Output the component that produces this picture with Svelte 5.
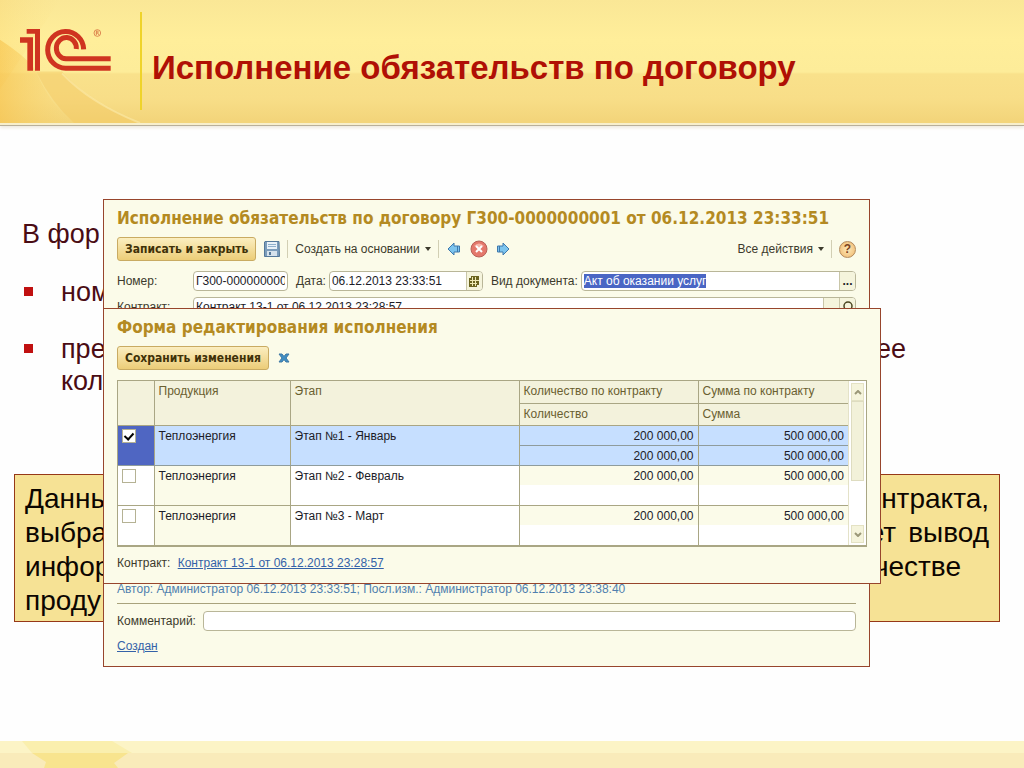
<script lang="ts">
  import { onMount } from "svelte";

  const rows = [
    { product: "Теплоэнергия", stage: "Этап №1 - Январь", qty: "200 000,00", sum: "500 000,00", checked: true, doneQty: "200 000,00", doneSum: "500 000,00" },
    { product: "Теплоэнергия", stage: "Этап №2 - Февраль", qty: "200 000,00", sum: "500 000,00", checked: false, doneQty: "", doneSum: "" },
    { product: "Теплоэнергия", stage: "Этап №3 - Март", qty: "200 000,00", sum: "500 000,00", checked: false, doneQty: "", doneSum: "" },
  ];

  let kind: HTMLInputElement;

  onMount(() => {
    kind.focus();
    kind.select();
  });
</script>

<div class="slide">
  <header>
    <svg class="glow" viewBox="0 0 240 124" preserveAspectRatio="none" aria-hidden="true">
      <defs>
        <linearGradient id="ray" x1="0" y1="0" x2="1" y2="0">
          <stop offset="0" stop-color="#f7c24a" stop-opacity="0.6" />
          <stop offset="1" stop-color="#f7d068" stop-opacity="0" />
        </linearGradient>
      </defs>
      <path d="M0 40Q30 60 36 72Q50 106 74 124H0Z" fill="url(#ray)" />
      <path d="M36 72Q52 104 74 124H140Q90 104 62 72Z" fill="#f3c65c" opacity="0.4" />
      <path d="M62 74Q90 104 140 124" fill="none" stroke="#fdf0b4" stroke-width="2" opacity="0.5" />
      <path d="M0 0H60L0 90Z" fill="url(#ray)" opacity="0.3" />
    </svg>
    <svg class="logo" viewBox="60 84 276 132" role="img" aria-label="1С">
      <g fill="#cf3420">
        <path d="M80 87H120V212H105V101H80Z" />
        <path d="M60 112H99V212H82V128H60Z" />
      </g>
      <g fill="none" stroke="#cf3420" stroke-width="15">
        <path d="M251 148A54 55 0 1 0 198 204.500H332" />
        <path d="M229 147A30 32 0 1 0 198 176.500H332" />
      </g>
      <circle cx="292" cy="99" r="10" fill="none" stroke="#cf5a30" stroke-width="2" />
      <path d="M289 105V93H293Q297 96 293 99H289M293 99L297 105" fill="none" stroke="#cf5a30" stroke-width="2" />
    </svg>
    <h1>Исполнение обязательств по договору</h1>
  </header>

  <main>
    <p class="lead">В фор</p>
    <ul>
      <li>ном</li>
      <li><span class="split"><span>пре</span><span>ее</span></span>кол</li>
    </ul>
    <div class="note">
      <div class="split"><span>Данны</span><span>нтракта,</span></div>
      <div class="split"><span>выбра</span><span class="pair"><span>ет</span><span>вывод</span></span></div>
      <div class="split short"><span>инфор</span><span>честве</span></div>
      <div>проду</div>
    </div>

    <section class="window doc">
      <h2>Исполнение обязательств по договору Г300-0000000001 от 06.12.2013 23:33:51</h2>
      <div class="toolbar">
        <button class="gold">Записать и закрыть</button>
        <button class="icon" aria-label="Записать">
          <svg width="16" height="16" viewBox="0 0 16 16">
            <path d="M1 .5H15L15.500 15.500H.5V1Z" fill="#7c9dbb" stroke="#54789a" />
            <path d="M3 1H13V8H3Z" fill="#e8f1f8" />
            <path d="M4 3.500H12M4 5.500H12" stroke="#8fb0cc" />
            <path d="M3 10H13V15H3Z" fill="#d6e2ec" />
            <path d="M5 11H7V14H5Z" fill="#54789a" />
          </svg>
        </button>
        <span class="sep"></span>
        <button class="flat">Создать на основании <i class="caret"></i></button>
        <span class="sep"></span>
        <button class="icon" aria-label="Назад">
          <svg width="14" height="14" viewBox="0 0 14 14"><path d="M1 7L7 1V4H12.500V10H7V13Z" fill="#7cc4ee" stroke="#3f78ac" /><path d="M10.500 4V10" stroke="#3f78ac" /></svg>
        </button>
        <button class="icon" aria-label="Отменить">
          <svg width="18" height="18" viewBox="0 0 18 18">
            <circle cx="9" cy="9" r="8" fill="#e4786c" stroke="#b86058" />
            <path d="M4 6Q9 1 14 6Q9 8 4 6Z" fill="#f5b5aa" />
            <path d="M6 6L12 12M12 6L6 12" stroke="#fff" stroke-width="2" />
          </svg>
        </button>
        <button class="icon" aria-label="Вперед">
          <svg width="14" height="14" viewBox="0 0 14 14"><path d="M13 7L7 1V4H1.500V10H7V13Z" fill="#7cc4ee" stroke="#3f78ac" /><path d="M3.500 4V10" stroke="#3f78ac" /></svg>
        </button>
        <button class="flat all">Все действия <i class="caret"></i></button>
        <span class="sep"></span>
        <button class="help" aria-label="Справка">?</button>
      </div>
      <div class="fields">
        <label for="number" class="first">Номер:</label>
        <input id="number" class="number" value="Г300-000000000" />
        <label for="date">Дата:</label>
        <span class="combo date">
          <input id="date" value="06.12.2013 23:33:51" />
          <button aria-label="Календарь">
            <svg width="12" height="12" viewBox="0 0 12 12">
              <path d="M3 1H11V10H9V12H1V3H3Z" fill="#6b6420" />
              <path d="M2 5.500H11M2 8.500H9M4.500 2V11M7.500 2V11" stroke="#efe9b4" />
            </svg>
          </button>
        </span>
        <label for="kind">Вид документа:</label>
        <span class="combo wide">
          <input id="kind" bind:this={kind} value="Акт об оказании услуг" />
          <button aria-label="Выбрать">...</button>
        </span>
      </div>
      <div class="fields">
        <label for="contract" class="first">Контракт:</label>
        <span class="combo wide">
          <input id="contract" value="Контракт 13-1 от 06.12.2013 23:28:57" />
          <button aria-label="Список"></button>
          <button aria-label="Открыть">
            <svg width="12" height="12" viewBox="0 0 12 12"><circle cx="6" cy="5" r="4" fill="none" stroke="#4a4520" stroke-width="1.500" /><path d="M4 8L1 11" stroke="#4a4520" stroke-width="2" /></svg>
          </button>
        </span>
      </div>
      <div class="tail">
        <div class="author">Автор: Администратор 06.12.2013 23:33:51; Посл.изм.: Администратор 06.12.2013 23:38:40</div>
        <div class="comment">
          <label for="comment">Комментарий:</label>
          <input id="comment" />
        </div>
        <a href="#state">Создан</a>
      </div>
    </section>

    <section class="window edit">
      <h2>Форма редактирования исполнения</h2>
      <div class="toolbar">
        <button class="gold">Сохранить изменения</button>
        <button class="icon" aria-label="Закрыть">
          <svg width="12" height="12" viewBox="0 0 12 12"><path d="M1 2H4L6 4.500L8 2H11L8 6L11 10H8L6 7.500L4 10H1L4 6Z" fill="#3f8fc4" stroke="#3f78a4" /></svg>
        </button>
      </div>
      <div class="grid">
        <table>
          <colgroup>
            <col class="c-check" /><col class="c-product" /><col /><col class="c-qty" /><col class="c-sum" />
          </colgroup>
          <thead>
            <tr>
              <th rowspan="2"></th>
              <th rowspan="2">Продукция</th>
              <th rowspan="2">Этап</th>
              <th>Количество по контракту</th>
              <th>Сумма по контракту</th>
            </tr>
            <tr>
              <th>Количество</th>
              <th>Сумма</th>
            </tr>
          </thead>
          <tbody>
            {#each rows as row (row.stage)}
              <tr class:active={row.checked}>
                <td rowspan="2" class="check"><input type="checkbox" checked={row.checked} aria-label={row.stage} /></td>
                <td rowspan="2" class="cream">{row.product}</td>
                <td rowspan="2">{row.stage}</td>
                <td class="num cream plan">{row.qty}</td>
                <td class="num cream plan">{row.sum}</td>
              </tr>
              <tr class:active={row.checked}>
                <td class="num">{row.doneQty}</td>
                <td class="num">{row.doneSum}</td>
              </tr>
            {/each}
          </tbody>
        </table>
        <div class="scroll">
          <button aria-label="Вверх"><svg width="8" height="5" viewBox="0 0 8 5"><path d="M1 4L4 1L7 4" /></svg></button>
          <span class="thumb"></span>
          <button aria-label="Вниз"><svg width="8" height="5" viewBox="0 0 8 5"><path d="M1 1L4 4L7 1" /></svg></button>
        </div>
      </div>
      <div class="link">Контракт: <a href="#contract">Контракт 13-1 от 06.12.2013 23:28:57</a></div>
    </section>
  </main>

  <footer>
    <svg width="160" height="27" viewBox="0 0 160 27" aria-hidden="true">
      <path d="M22 0H112L132 12H32Z" fill="#faefae" />
      <path d="M32 12H128L114 22L118 27H44L46 21Z" fill="#f8e48e" />
    </svg>
  </footer>
</div>

<style>
  :global(body) {
    margin: 0;
    background: #fefefe;
  }
  * {
    box-sizing: border-box;
  }
  .slide {
    display: flex;
    flex-direction: column;
    min-height: 100vh;
    font-family: "Liberation Sans", Arial, sans-serif;
  }

  header {
    position: relative;
    display: flex;
    align-items: flex-start;
    gap: 28px;
    padding: 12px 20px 13px;
    background: linear-gradient(#fae796 0, #ffee9a 40px, #fdec99 72px, #f9e18b 74px, #f8de88 98px, #f3d57b 120px);
    border-bottom: 2px solid #f7efcc;
    box-shadow: 0 1px 0 #b9b09a, 0 3px 3px #eeeae0;
  }
  .glow {
    position: absolute;
    left: 0;
    top: 0;
    width: 240px;
    height: 100%;
  }
  .logo {
    position: relative;
    width: 92px;
    height: 44px;
    margin-top: 16px;
  }
  h1 {
    position: relative;
    margin: 0;
    padding: 38px 0 24px 10px;
    border-left: 2px solid #efd32a;
    font-size: 33px;
    line-height: 36px;
    color: #b01005;
  }

  main {
    position: relative;
    flex: 1;
    padding: 93px 24px 100px 14px;
    font-size: 27px;
  }
  .lead {
    margin: 0 0 26px 8px;
    line-height: 32px;
    color: #4a0c14;
  }
  ul {
    display: flex;
    flex-direction: column;
    gap: 25px;
    margin: 0;
    padding: 0 94px 0 10px;
    list-style: none;
    line-height: 32px;
    color: #4a0c14;
  }
  li {
    position: relative;
    padding-left: 37px;
  }
  li::before {
    content: "";
    position: absolute;
    left: 0;
    top: 11px;
    width: 9px;
    height: 9px;
    background: #c01010;
  }
  .split {
    display: flex;
    justify-content: space-between;
  }
  .note {
    margin-top: 77px;
    padding: 7px 10px 3px;
    border: 1px solid #963818;
    background: #f6e295;
    font-size: 28px;
    line-height: 34px;
    color: #0c0500;
  }
  .short {
    padding-right: 28px;
  }
  .pair {
    display: flex;
    gap: 12px;
  }

  .window {
    position: absolute;
    left: 103px;
    display: flex;
    flex-direction: column;
    padding: 7px 13px 12px;
    border: 1px solid #97452c;
    background: #fbfbe9;
    font-size: 12px;
    color: #3c3a2c;
  }
  .doc {
    top: 74px;
    right: 154px;
    min-height: 468px;
  }
  .edit {
    top: 183px;
    right: 143px;
    min-height: 276px;
  }
  h2 {
    margin: 0;
    font-family: "DejaVu Sans Condensed", "DejaVu Sans", Tahoma, sans-serif;
    font-size: 17px;
    line-height: 22px;
    white-space: nowrap;
    color: #b48a22;
  }
  button,
  input {
    margin: 0;
    font: inherit;
    color: inherit;
  }
  button {
    display: flex;
    align-items: center;
    justify-content: center;
    padding: 0;
    border: 0;
    background: none;
  }
  .toolbar {
    display: flex;
    align-items: center;
    gap: 7px;
    height: 24px;
    margin: 8px 0 10px;
  }
  .gold {
    height: 24px;
    padding: 0 7px;
    border: 1px solid #c9ab62;
    border-radius: 3px;
    background: linear-gradient(#fbeec0, #eccd78);
    font-family: "DejaVu Sans Condensed", "DejaVu Sans", Tahoma, sans-serif;
    font-size: 12px;
    font-weight: bold;
    color: #3f3108;
  }
  .icon {
    min-width: 17px;
  }
  .sep {
    width: 1px;
    height: 18px;
    background: #d2cfb4;
  }
  .flat {
    gap: 5px;
  }
  .caret {
    border: 3px solid transparent;
    border-top: 4px solid #3c3a2c;
    border-bottom: 0;
  }
  .all {
    margin-left: auto;
  }
  .help {
    width: 17px;
    height: 17px;
    border: 1px solid #b38a5c;
    border-radius: 50%;
    background: radial-gradient(#fde9b8, #efb66c);
    font-weight: bold;
    color: #7a4322;
  }

  .fields {
    display: flex;
    align-items: center;
    height: 20px;
    margin-bottom: 6px;
    white-space: nowrap;
  }
  .fields label {
    margin: 0 3px 0 8px;
  }
  .fields .first {
    width: 76px;
    margin: 0;
  }
  .fields > input,
  .combo,
  .comment input {
    height: 20px;
    border: 1px solid #b9b698;
    border-radius: 4px;
    background: #fff;
    color: #1c1c28;
  }
  .fields > input {
    padding: 0 2px;
  }
  .number {
    width: 95px;
  }
  .combo {
    display: flex;
    overflow: hidden;
  }
  .combo input {
    flex: 1;
    min-width: 0;
    padding: 0 2px;
    border: 0;
    outline: 0;
    background: none;
  }
  .combo input::selection {
    background: #4a66c4;
    color: #fff;
  }
  .combo button {
    width: 16px;
    border-left: 1px solid #c9c6a8;
    background: #f5f4dc;
    font-weight: bold;
  }
  .date {
    width: 154px;
  }
  .wide {
    flex: 1;
  }

  .tail {
    margin-top: auto;
  }
  .author {
    padding-bottom: 6px;
    border-bottom: 1px solid #a8a27c;
    line-height: 16px;
    color: #4f7fae;
  }
  .comment {
    display: flex;
    align-items: center;
    gap: 7px;
    margin: 7px 0;
  }
  .comment input {
    flex: 1;
  }
  a {
    color: #3462a8;
  }
  .tail a {
    line-height: 16px;
  }

  .grid {
    display: flex;
    border: 1px solid #a9a684;
    border-bottom-width: 2px;
    background: #fff;
  }
  table {
    flex: 1;
    table-layout: fixed;
    border-collapse: collapse;
    line-height: 16px;
  }
  .c-check {
    width: 36px;
  }
  .c-product {
    width: 136px;
  }
  .c-qty {
    width: 179px;
  }
  .c-sum {
    width: 150px;
  }
  th,
  td {
    height: 20px;
    padding: 2px 4px 1px;
    border-right: 1px solid #a9a684;
    border-bottom: 1px solid #a9a684;
    text-align: left;
    vertical-align: top;
    color: #1c1c28;
  }
  th {
    height: 22px;
    background: #f3f2dc;
    font-weight: normal;
    color: #6a6030;
  }
  th:last-child,
  td:last-child {
    border-right: 0;
  }
  tbody tr:last-child td,
  tbody tr:nth-last-child(2) td[rowspan] {
    border-bottom: 0;
  }
  .num {
    text-align: right;
  }
  .cream {
    background: #fbfbe9;
  }
  .plan {
    border-bottom: 0;
  }
  .active td {
    background: #c6dfff;
    border-bottom: 1px solid #8f9c9c;
  }
  .active .check {
    background: #4f66c2;
  }
  .check input {
    appearance: none;
    display: block;
    width: 14px;
    height: 14px;
    margin-top: 1px;
    border: 1px solid #b5b294;
    background: #fff;
  }
  .check input:checked::after {
    content: "";
    display: block;
    width: 4px;
    height: 7px;
    margin: 1px auto;
    border: solid #000;
    border-width: 0 2px 2px 0;
    transform: rotate(42deg);
  }
  .scroll {
    display: flex;
    flex-direction: column;
    width: 18px;
    padding: 2px;
    border-left: 1px solid #e4e2c8;
  }
  .scroll button {
    height: 18px;
    border: 1px solid #e4e2c4;
    background: #f5f4dc;
  }
  .scroll path {
    fill: none;
    stroke: #9a9778;
    stroke-width: 2;
  }
  .thumb {
    height: 80px;
    margin-bottom: auto;
    border: 1px solid #dedcc0;
    background: #f2f1d9;
  }
  .link {
    margin-top: 8px;
    line-height: 16px;
  }
  .link a {
    margin-left: 4px;
  }

  footer {
    display: flex;
    flex-shrink: 0;
    height: 27px;
    background: linear-gradient(#fcf4c6 12px, #f9ebba 12px);
  }
</style>
